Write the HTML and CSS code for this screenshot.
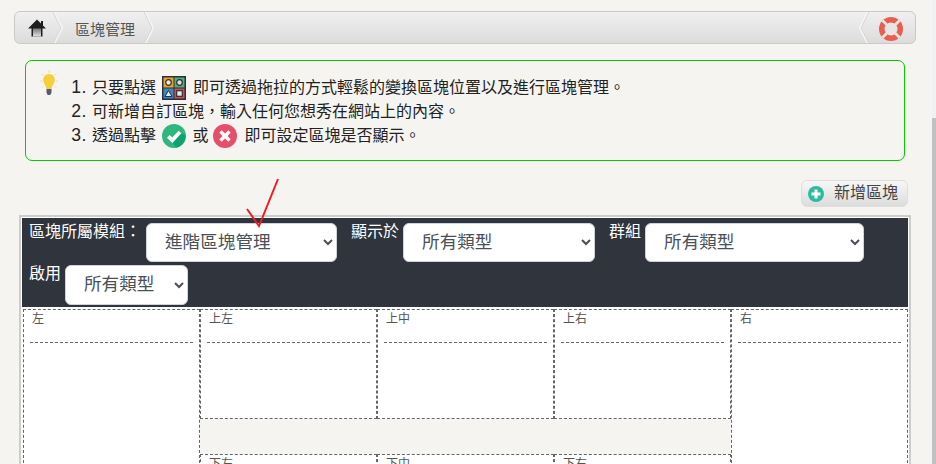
FILE: index.html
```html
<!DOCTYPE html>
<html lang="zh-Hant">
<head>
<meta charset="utf-8">
<title>區塊管理</title>
<link rel="stylesheet" href="styles.css">
</head>
<body>
<div class="page">
  <nav class="crumbs">
    <a class="crumb-home">
      <svg width="18" height="18" viewBox="0 0 18 18"><defs><linearGradient id="door" x1="0" y1="0" x2="0" y2="1"><stop offset="0" stop-color="#777"/><stop offset="1" stop-color="#e2e2e2"/></linearGradient></defs><path d="M9 .5 0 9.500h3.500V17.500h11V9.500H18L15 6.500V2h-2v2.500z" fill="#1e1e1e"/><path d="M5 9.500h8V17.500H5z" fill="url(#door)"/></svg>
    </a>
    <svg class="chev" width="10" height="32" viewBox="0 0 10 32"><path d="M1 0 9 16 1 32" fill="none" stroke="#f6f6f6" stroke-width="2"/><path d="M0 0 8 16 0 32" fill="none" stroke="#d4d4d4"/></svg>
    <span class="crumb-text">區塊管理</span>
    <svg class="chev" width="10" height="32" viewBox="0 0 10 32"><path d="M1 0 9 16 1 32" fill="none" stroke="#f6f6f6" stroke-width="2"/><path d="M0 0 8 16 0 32" fill="none" stroke="#d4d4d4"/></svg>
    <span class="crumb-fill"></span>
    <svg class="chev" width="10" height="32" viewBox="0 0 10 32"><path d="M9 0 1 16 9 32" fill="none" stroke="#f6f6f6" stroke-width="2"/><path d="M10 0 2 16 10 32" fill="none" stroke="#d4d4d4"/></svg>
    <svg class="buoy" width="24" height="24" viewBox="0 0 24 24"><circle cx="12" cy="12" r="12" fill="#e85f50"/><path d="M3.500 3.500 20.500 20.500M20.500 3.500 3.500 20.500" stroke="#f0e6e2" stroke-width="2.800"/><circle cx="12" cy="12" r="6.500" fill="#e6e6e5"/></svg>
  </nav>

  <section class="notice">
    <svg class="bulb" width="18" height="26" viewBox="0 0 18 26">
      <path d="M9 0v3M1.500 3.500 3.500 5.500M16.500 3.500 14.500 5.500M0 11h2.500M15.500 11H18M2 17.500 3.500 16M16 17.500 14.500 16" stroke="#f3dd8c" stroke-width="1"/>
      <path d="M9 4c3.600 0 5.800 2.800 5.800 6 0 3.400-2.800 5-3.200 9H6.400C6 15 3.200 13.400 3.200 10c0-3.200 2.200-6 5.800-6z" fill="#f4d040"/>
      <path d="M6.500 19h5v3.500l-1.200 2.500H7.700L6.500 22.500z" fill="#565a72"/>
    </svg>
    <ol class="tips">
      <li>只要點選 <svg class="ico-grid" width="24" height="24" viewBox="0 0 24 24"><rect width="24" height="24" fill="#2b2f38"/><rect x="1.500" y="1.500" width="10" height="10" fill="#f0a41c"/><rect x="12.500" y="1.500" width="10" height="10" fill="#4fae7a"/><rect x="1.500" y="12.500" width="10" height="10" fill="#3a87c8"/><rect x="12.500" y="12.500" width="10" height="10" fill="#d9484f"/><circle cx="6.500" cy="6.500" r="2.800" fill="#e8e8e8" stroke="#2b2f38" stroke-width="1.200"/><circle cx="17.500" cy="6.500" r="2.800" fill="#dcdcdc" stroke="#2b2f38" stroke-width="1.200"/><path d="M6.500 14.500 10 20.500H3z" fill="#e8e8e8" stroke="#2b2f38"/><rect x="14.700" y="14.700" width="5.600" height="5.600" fill="#e8e8e8" stroke="#2b2f38" stroke-width="1.200"/></svg> 即可透過拖拉的方式輕鬆的變換區塊位置以及進行區塊管理。</li>
      <li>可新增自訂區塊，輸入任何您想秀在網站上的內容。</li>
      <li>透過點擊 <svg class="ico-round ico-check" width="24" height="24" viewBox="0 0 24 24"><circle cx="12" cy="12" r="12" fill="#2fb77d"/><path d="M10.300 17.500 18.600 8.500l5 3.500A12 12 0 0 1 14 23.800z" fill="#11a274"/><path d="M6.300 12.300 10.300 16.200 18 8" fill="none" stroke="#fff" stroke-width="3.800"/></svg> 或 <svg class="ico-round ico-cross" width="24" height="24" viewBox="0 0 24 24"><circle cx="12" cy="12" r="12" fill="#e4506a"/><path d="M7.500 7.500 16.500 16.500M16.500 7.500 7.500 16.500" stroke="#fff" stroke-width="3.400"/></svg> 即可設定區塊是否顯示。</li>
    </ol>
  </section>

  <div class="toolbar">
    <button class="btn-add" type="button">
      <svg width="16" height="16" viewBox="0 0 16 16"><circle cx="8" cy="8" r="8" fill="#2dbb9f"/><path d="M8 3.500v9M3.500 8h9" stroke="#fff" stroke-width="3"/></svg>
      <span class="btn-label">新增區塊</span>
    </button>
  </div>

  <section class="board">
    <form class="filters">
      <label class="field">區塊所屬模組：<select class="sel sel-module"><option>進階區塊管理</option></select></label>
      <label class="field">顯示於<select class="sel sel-show"><option>所有類型</option></select></label>
      <label class="field">群組<select class="sel sel-group"><option>所有類型</option></select></label>
      <label class="field">啟用<select class="sel sel-on"><option>所有類型</option></select></label>
    </form>
    <div class="layout">
      <div class="slot slot-side"><h4>左</h4></div>
      <div class="center">
        <div class="slot"><h4>上左</h4></div>
        <div class="slot"><h4>上中</h4></div>
        <div class="slot"><h4>上右</h4></div>
        <div class="gap"></div>
        <div class="slot"><h4>下左</h4></div>
        <div class="slot"><h4>下中</h4></div>
        <div class="slot"><h4>下右</h4></div>
      </div>
      <div class="slot slot-side"><h4>右</h4></div>
    </div>
  </section>
</div>

<svg class="pen-mark" width="34" height="50" viewBox="0 0 34 50"><path d="M32 1 13 48 1 31" fill="none" stroke="#ee1c25" stroke-width="2"/></svg>
<div class="scroll-thumb"></div>
</body>
</html>
```
FILE: styles.css
```css
* { box-sizing: border-box; }
html, body { margin: 0; height: 464px; overflow: hidden; }
body {
  position: relative;
  background: #f5f4f1;
  font-family: "Liberation Sans", "Noto Sans CJK TC", sans-serif;
  color: #333;
}
.page { padding: 11px 0 0 14px; width: 932px; }

.crumbs {
  display: flex;
  align-items: center;
  width: 902px;
  height: 33px;
  border: 1px solid #c9c9c9;
  border-radius: 6px;
  background: linear-gradient(#f0f0f1, #dcdcdb);
  overflow: hidden;
}
.crumb-home { display: flex; width: 38px; padding-left: 13px; }
.chev { flex: none; }
.crumb-text { width: 81px; padding: 2px 0 0 12px; font-size: 15px; color: #555; }
.crumb-fill { flex: 1; }
.buoy { margin: 0 12px 0 10px; flex: none; position: relative; top: 1px; }

.notice {
  display: flex;
  margin: 16px 0 0 11px;
  width: 880px;
  height: 101px;
  padding: 9px 0 0 14px;
  border: 1px solid #00cc00;
  border-radius: 7px;
}
.bulb { flex: none; }
.tips {
  margin: 5px 0 0;
  padding: 0 0 0 34px;
  font-size: 16px;
  line-height: 24px;
  color: #222;
}
.tips li { height: 24px; }
.tips li::marker { font-size: 17.6px; letter-spacing: 0.4px; }
.ico-grid, .ico-round { vertical-align: middle; margin: -4px 2px -2px; }
.ico-check { margin-right: 1.5px; }
.ico-cross { margin-left: 0.6px; margin-right: 2.5px; }

.toolbar { display: flex; justify-content: flex-end; width: 894px; margin-top: 19px; }
.btn-add {
  display: flex;
  align-items: center;
  gap: 10px;
  width: 107px;
  height: 27px;
  padding: 0 0 0 6px;
  border: 1px solid #dedede;
  border-radius: 6px;
  background: linear-gradient(#f7f7f7, #dcdcdc);
  font: inherit;
  font-size: 16px;
  color: #444;
}
.btn-label { line-height: 20px; padding-bottom: 1px; }

.board {
  width: 892px;
  margin: 8px 0 0 5px;
  padding: 1px;
  border: 2px solid #cdcdcb;
  background: #fff;
}
.filters {
  display: flex;
  flex-wrap: wrap;
  align-items: flex-start;
  column-gap: 14px;
  row-gap: 1px;
  height: 89px;
  padding: 5px 0 0 7px;
  background: #2f343d;
}
.field {
  display: flex;
  align-items: flex-start;
  gap: 4px;
  font-size: 16px;
  line-height: 18px;
  color: #fff;
}
.sel {
  height: 39px;
  padding: 0 14px 2px;
  border: 1px solid #ced4da;
  border-radius: 6px;
  background-color: #fff;
  font: inherit;
  font-size: 17.6px;
  line-height: 24px;
  color: #495057;
}
.sel-module { width: 191px; margin-left: 1px; }
.sel-show { width: 192px; }
.sel-group { width: 219px; }
.sel-on { width: 123px; height: 40px; }

.layout {
  display: grid;
  grid-template-columns: 177px 531px 177px;
  margin: 2px 0 0 1px;
  height: 300px;
}
.center {
  display: grid;
  grid-template-columns: repeat(3, 177px);
  grid-template-rows: 110px 35px 110px;
}
.gap { grid-column: 1 / -1; background: #f5f4f1; }
.slot { border: 1px dashed #666; background: #fff; padding: 0 6px; }
.slot h4 {
  margin: 0;
  height: 33px;
  padding: 0 0 0 2px;
  border-bottom: 1px dashed #666;
  font-size: 12px;
  font-weight: 400;
  line-height: 18px;
  color: #555;
}

.pen-mark { position: absolute; left: 246px; top: 178px; }
.scroll-thumb {
  position: absolute;
  right: 0;
  top: 0;
  bottom: 0;
  width: 4px;
  background: linear-gradient(#f1f1f1 118px, #c1c1c1 118px);
}
```
